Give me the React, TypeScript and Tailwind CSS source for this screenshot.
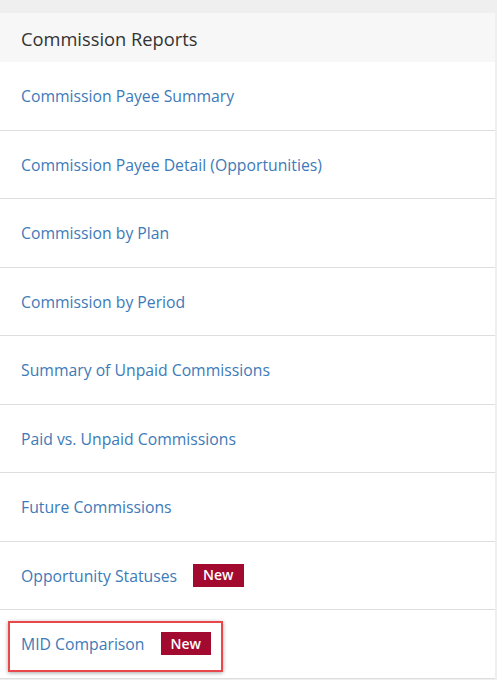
import React from "react"

type Report = {
  label: string
  isNew?: boolean
  highlight?: boolean
}

const reports: Report[] = [
  { label: "Commission Payee Summary" },
  { label: "Commission Payee Detail (Opportunities)" },
  { label: "Commission by Plan" },
  { label: "Commission by Period" },
  { label: "Summary of Unpaid Commissions" },
  { label: "Paid vs. Unpaid Commissions" },
  { label: "Future Commissions" },
  { label: "Opportunity Statuses", isNew: true },
  { label: "MID Comparison", isNew: true, highlight: true },
]

const NewBadge = () => (
  <span className="ml-4 inline-flex h-[23px] items-center bg-[#a30a2f] px-[10px] text-[14px] font-semibold leading-none text-white">
    New
  </span>
)

const App = () => {
  return (
    <div
      className="min-h-[680px] w-[497px] bg-[#efefef] pt-[13px]"
      style={{ fontFamily: '"Open Sans", "Liberation Sans", sans-serif' }}
    >
      <div className="w-[495px] bg-white">
        {/* Header */}
        <div className="flex h-[49px] items-center bg-[#f7f7f7] px-[21px] pt-[3px]">
          <h2 className="text-[18.3px] text-[#333]">Commission Reports</h2>
        </div>

        {/* Report links */}
        <ul>
          {reports.map((r) => (
            <li
              key={r.label}
              className="relative flex h-[68.5px] items-center border-b border-[#dedede] px-[21px]"
            >
              <a href="#" className="pt-[3px] text-[15.75px] text-[#3d7ab8]">
                {r.label}
              </a>
              {r.isNew && <NewBadge />}
              {r.highlight && (
                <span className="pointer-events-none absolute left-[8px] top-[11px] h-[51px] w-[215px] border-2 border-[#e8474b] shadow-[0_1px_4px_rgba(0,0,0,0.35)]" />
              )}
            </li>
          ))}
        </ul>
      </div>
    </div>
  )
}

export default App
